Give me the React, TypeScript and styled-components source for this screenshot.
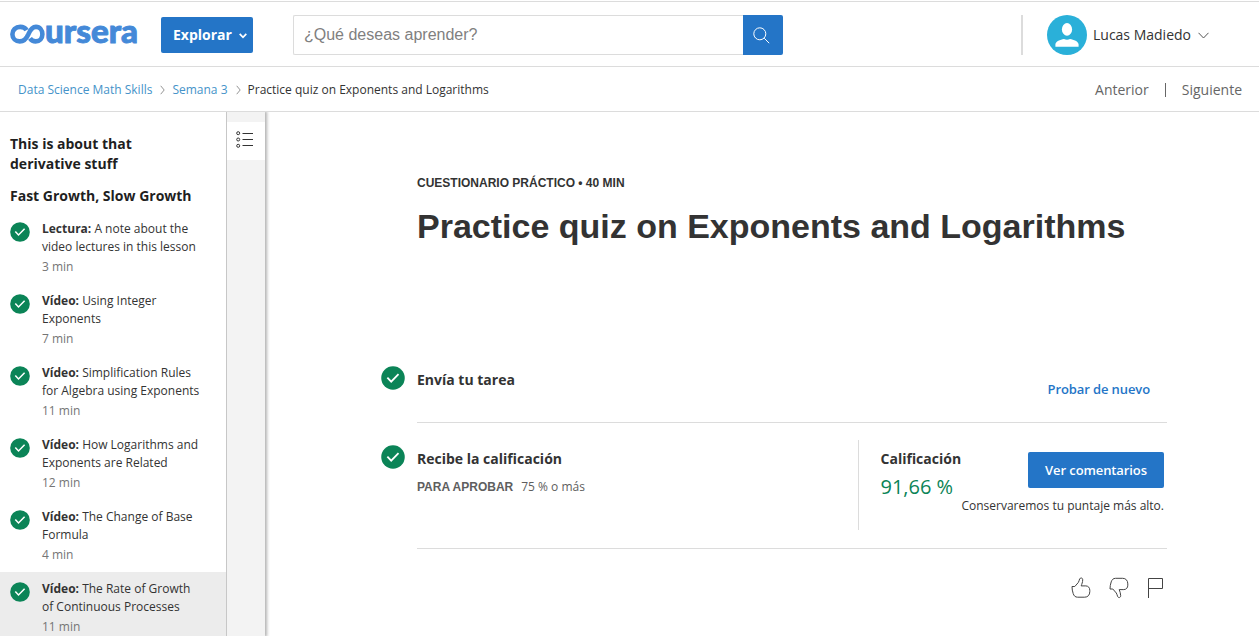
import React from 'react';
import styled, { createGlobalStyle } from 'styled-components';

const GlobalStyle = createGlobalStyle`
  *, *::before, *::after { box-sizing: border-box; }
  html, body { margin: 0; padding: 0; background: #fff; overflow: hidden; }
  body { font-family: "Open Sans", "Noto Sans", sans-serif; color: #333; font-size: 14px; }
  svg { display: block; flex: none; }
  h1, h2, h3, p, ul { margin: 0; padding: 0; }
  button { font-family: inherit; border: 0; margin: 0; cursor: pointer; }
  a { text-decoration: none; }
`;

const Page = styled.div`
  display: flex;
  flex-direction: column;
  width: 1259px;
  height: 636px;
  overflow: hidden;
  padding-top: 1px;
`;

const Header = styled.header`
  flex: none;
  display: flex;
  align-items: center;
  height: 66px;
  padding-left: 10px;
  border-top: 1px solid #dcdcdc;
  border-bottom: 1px solid #dcdcdc;
`;

const ExploreButton = styled.button`
  display: flex;
  align-items: center;
  gap: 7px;
  width: 92px;
  height: 36px;
  margin: 2px 0 0 23px;
  padding: 0 0 1px 12px;
  border-radius: 2px;
  background: #2475c7;
  color: #fff;
  font-size: 14px;
  font-weight: 700;
  svg { margin-top: 3px; }
`;

const Search = styled.form`
  display: flex;
  width: 490px;
  height: 40px;
  margin: 2px 0 0 40px;
`;

const SearchInput = styled.input`
  flex: 1;
  min-width: 0;
  height: 40px;
  padding: 0 0 0 10px;
  border: 1px solid #dcdcdc;
  border-right: 0;
  border-radius: 2px 0 0 2px;
  outline: 0;
  font: 16px "Liberation Sans", Arial, sans-serif;
  &::placeholder { color: #808080; opacity: 1; }
`;

const SearchButton = styled.button`
  display: flex;
  align-items: center;
  justify-content: center;
  width: 40px;
  padding: 0 4px 0 0;
  border-radius: 0 2px 2px 0;
  background: #2475c7;
`;

const Account = styled.div`
  display: flex;
  align-items: center;
  height: 40px;
  margin: 2px 50px 0 auto;
  padding-left: 24px;
  border-left: 2px solid #dcdcdc;
`;

const UserName = styled.span`
  margin: 0 7px 0 6px;
  padding-bottom: 1px;
  font-size: 14px;
`;

const SubBar = styled.nav`
  flex: none;
  display: flex;
  align-items: center;
  justify-content: space-between;
  height: 45px;
  padding: 0 17px 0 18px;
  border-bottom: 1px solid #dcdcdc;
`;

const Crumbs = styled.div`
  display: flex;
  align-items: center;
  font-size: 12px;
  svg { margin: 2px 7px 0 8px; }
`;

const CrumbLink = styled.a`
  color: #4593c9;
`;

const Pager = styled.div`
  display: flex;
  align-items: center;
  color: #666;
  font-size: 14px;
`;

const PagerRule = styled.i`
  width: 1px;
  height: 14px;
  margin: 1px 16px 0;
  background: #666;
`;

const Body = styled.div`
  flex: 1;
  min-height: 0;
  display: flex;
`;

const Sidebar = styled.aside`
  flex: none;
  width: 227px;
  padding-top: 22px;
  border-right: 1px solid #c7c7c7;
  overflow: hidden;
`;

const ModuleTitle = styled.h2`
  padding: 0 60px 0 10px;
  color: #1f1f1f;
  font-size: 14px;
  line-height: 20px;
  font-weight: 700;
`;

const LessonTitle = styled.h3`
  padding: 12px 0 6px 10px;
  color: #1f1f1f;
  font-size: 14px;
  line-height: 20px;
  font-weight: 700;
`;

const LessonItem = styled.li<{ $active?: boolean }>`
  display: flex;
  gap: 12px;
  height: 72px;
  padding: 8px 0 0 10px;
  background: ${(p) => (p.$active ? '#ececec' : 'transparent')};
  svg { margin-top: 2px; }
`;

const LessonText = styled.div`
  font-size: 12px;
  line-height: 18px;
  white-space: pre-line;
`;

const Duration = styled.div`
  margin-top: 2px;
  color: #757575;
`;

const Rail = styled.div`
  flex: none;
  width: 38px;
  padding-top: 10px;
  background: #f3f3f3;
  box-shadow: 1px 0 3px 1px rgba(0, 0, 0, 0.3);
  clip-path: inset(0 -6px 0 0);
`;

const RailTab = styled.div`
  display: flex;
  align-items: center;
  justify-content: center;
  height: 38px;
  padding: 0 3px 3px 0;
  background: #fff;
`;

const Main = styled.main`
  flex: 1;
  display: flex;
  flex-direction: column;
  padding: 62px 92px 0 116px;
`;

const Eyebrow = styled.p`
  padding-left: 36px;
  font: 700 12px/18px "Liberation Sans", Arial, sans-serif;
`;

const Title = styled.h1`
  padding: 13px 0 0 36px;
  font: 700 34px/42px "Liberation Sans", Arial, sans-serif;
  white-space: nowrap;
`;

const StepList = styled.div`
  display: flex;
  flex-direction: column;
  gap: 22px;
  padding-top: 119px;
`;

const Step = styled.section`
  display: flex;
  gap: 12px;
`;

const StepBody = styled.div<{ $height: number }>`
  flex: 1;
  display: flex;
  justify-content: space-between;
  height: ${(p) => p.$height}px;
  padding-top: 4px;
  border-bottom: 1px solid #dcdcdc;
`;

const StepTitle = styled.h3`
  font-size: 14px;
  line-height: 20px;
  font-weight: 700;
`;

const Retry = styled.a`
  margin: 10px 17px 0 0;
  color: #2475c7;
  font-size: 13px;
  letter-spacing: -0.1px;
  line-height: 18px;
  font-weight: 600;
`;

const Requirement = styled.p`
  display: flex;
  gap: 8px;
  padding-top: 8px;
  color: #5e5e5e;
  font-size: 12px;
  line-height: 20px;
  b { font: 700 12px/20px "Liberation Sans", Arial, sans-serif; }
`;

const GradePanel = styled.div`
  display: flex;
  flex-direction: column;
  width: 309px;
  height: 90px;
  margin-top: -9px;
  padding: 9px 0 0 21.5px;
  border-left: 1px solid #dcdcdc;
`;

const GradeRow = styled.div`
  display: flex;
  justify-content: space-between;
  height: 48px;
  padding-right: 3px;
`;

const Grade = styled.div`
  color: #0b8457;
  font-size: 20px;
  line-height: 28px;
  padding-top: 4px;
`;

const FeedbackButton = styled.button`
  width: 136px;
  height: 36px;
  margin-top: 3px;
  padding: 0;
  border-radius: 2px;
  background: #2475c7;
  color: #fff;
  font-size: 13px;
  letter-spacing: -0.1px;
  font-weight: 600;
`;

const GradeNote = styled.p`
  padding-right: 3px;
  text-align: right;
  font-size: 12px;
  line-height: 18px;
  white-space: nowrap;
`;

const Reactions = styled.div`
  display: flex;
  justify-content: flex-end;
  gap: 18px;
  padding: 28px 3px 0 0;
`;

const Logo = () => (
  <svg width="128" height="44" viewBox="0 -10 128 44" role="img" aria-label="coursera">
    <path
      d="M16.6 8.2C15.3 5.8 13 4.9 10.2 4.9C5.6 4.9 2.4 8 2.4 12.2C2.4 16.400 5.6 19.400 9.800 19.400C14 19.400 16.200 17 18.400 12.200C20.400 7.400 22.600 4.900 26 4.900C30 4.900 32.400 8.400 32.400 12.200C32.400 16.400 29.600 19.400 25.700 19.400C23 19.400 21.200 18.200 20 16.400"
      fill="none"
      stroke="#4489d8"
      strokeWidth="4.6"
    />
    <text
      x="35"
      y="21"
      fill="#4489d8"
      stroke="#4489d8"
      strokeWidth="0.9"
      fontFamily="Lato, sans-serif"
      fontWeight="900"
      fontSize="32"
      textLength="93"
      lengthAdjust="spacingAndGlyphs"
    >
      ursera
    </text>
  </svg>
);

const CheckBadge = ({ size }: { size: number }) => (
  <svg width={size} height={size} viewBox="0 0 20 20">
    <circle cx="10" cy="10" r="9.8" fill="#0b8457" />
    <path d="M5.3 9.6l3.2 3.4 6.1-6.3" fill="none" stroke="#fff" strokeWidth="1.5" />
  </svg>
);

const Chevron = () => (
  <svg width="5" height="10" viewBox="0 0 5 10">
    <path d="M.7.8 4.2 5 .7 9.2" fill="none" stroke="#888" strokeWidth="0.9" />
  </svg>
);

const lessons = [
  { kind: 'Lectura:', title: 'A note about the\nvideo lectures in this lesson', time: '3 min' },
  { kind: 'Vídeo:', title: 'Using Integer\nExponents', time: '7 min' },
  { kind: 'Vídeo:', title: 'Simplification Rules\nfor Algebra using Exponents', time: '11 min' },
  { kind: 'Vídeo:', title: 'How Logarithms and\nExponents are Related', time: '12 min' },
  { kind: 'Vídeo:', title: 'The Change of Base\nFormula', time: '4 min' },
  { kind: 'Vídeo:', title: 'The Rate of Growth\nof Continuous Processes', time: '11 min', active: true },
];

const THUMB =
  'M1 9.5H3.8L7.3 5.5C8.2 4.3 8 3.2 8.6 2C9 1.2 9.6 1 10.2 1C11.2 1 11.7 1.8 11.7 2.8C11.7 5.2 10.8 7 10.2 8.9H14.8C17.3 8.900 18.800 10.800 18.800 13.300V14.600C18.800 18 16.800 20.200 13.700 20.200H6.600C4.200 20.200 2.900 18.800 2.200 16.600C1.400 14.200 1 12 1 9.500Z';

export default function App() {
  return (
    <>
      <GlobalStyle />
      <Page>
        <Header>
          <Logo />
          <ExploreButton>
            Explorar
            <svg width="8" height="6" viewBox="0 0 8 6">
              <path d="M.7.8 4 4.3 7.3.8" fill="none" stroke="#fff" strokeWidth="1.7" />
            </svg>
          </ExploreButton>
          <Search>
            <SearchInput placeholder="¿Qué deseas aprender?" />
            <SearchButton type="button" aria-label="Buscar">
              <svg width="17" height="17" viewBox="0 0 17 17" fill="none" stroke="#fff">
                <circle cx="6.8" cy="6.8" r="6" />
                <path d="m11.2 11.2 5 5" />
              </svg>
            </SearchButton>
          </Search>
          <Account>
            <svg width="40" height="40" viewBox="0 0 40 40">
              <circle cx="20" cy="20" r="20" fill="#2ab0d9" />
              <ellipse cx="20" cy="14.4" rx="5.1" ry="6.3" fill="#fff" />
              <path
                d="M8.4 31.7v-2.4c0-2.7 5-5 8.6-5.4 1.6 1 4.4 1 6 0 3.6.4 8.6 2.7 8.6 5.4v2.4Z"
                fill="#fff"
              />
            </svg>
            <UserName>Lucas Madiedo</UserName>
            <svg width="11" height="7" viewBox="0 0 11 7">
              <path d="M.5.8 5.5 6 10.5.8" fill="none" stroke="#555" />
            </svg>
          </Account>
        </Header>
        <SubBar>
          <Crumbs>
            <CrumbLink>Data Science Math Skills</CrumbLink>
            <Chevron />
            <CrumbLink>Semana 3</CrumbLink>
            <Chevron />
            <span>Practice quiz on Exponents and Logarithms</span>
          </Crumbs>
          <Pager>
            <span>Anterior</span>
            <PagerRule />
            <span>Siguiente</span>
          </Pager>
        </SubBar>
        <Body>
          <Sidebar>
            <ModuleTitle>This is about that derivative stuff</ModuleTitle>
            <LessonTitle>Fast Growth, Slow Growth</LessonTitle>
            <ul>
              {lessons.map((l) => (
                <LessonItem key={l.title} $active={l.active}>
                  <CheckBadge size={20} />
                  <LessonText>
                    <b>{l.kind}</b> {l.title}
                    <Duration>{l.time}</Duration>
                  </LessonText>
                </LessonItem>
              ))}
            </ul>
          </Sidebar>
          <Rail>
            <RailTab>
              <svg width="18" height="17" viewBox="0 0 18 17" fill="none" stroke="#333">
                <circle cx="2.2" cy="2.2" r="1.5" />
                <circle cx="2.2" cy="8.5" r="1.5" />
                <circle cx="2.2" cy="14.8" r="1.5" />
                <path d="M6.500 2.500H17M6.500 8.500H17M6.500 14.500H17" />
              </svg>
            </RailTab>
          </Rail>
          <Main>
            <Eyebrow>CUESTIONARIO PRÁCTICO • 40 MIN</Eyebrow>
            <Title>Practice quiz on Exponents and Logarithms</Title>
            <StepList>
              <Step>
                <CheckBadge size={24} />
                <StepBody $height={57}>
                  <StepTitle>Envía tu tarea</StepTitle>
                  <Retry>Probar de nuevo</Retry>
                </StepBody>
              </Step>
              <Step>
                <CheckBadge size={24} />
                <StepBody $height={104}>
                  <div>
                    <StepTitle>Recibe la calificación</StepTitle>
                    <Requirement>
                      <b>PARA APROBAR</b>
                      <span>75 % o más</span>
                    </Requirement>
                  </div>
                  <GradePanel>
                    <GradeRow>
                      <div>
                        <StepTitle>Calificación</StepTitle>
                        <Grade>91,66 %</Grade>
                      </div>
                      <FeedbackButton>Ver comentarios</FeedbackButton>
                    </GradeRow>
                    <GradeNote>Conservaremos tu puntaje más alto.</GradeNote>
                  </GradePanel>
                </StepBody>
              </Step>
            </StepList>
            <Reactions>
              <svg width="20" height="22" viewBox="0 0 20 22" fill="none" stroke="#444">
                <path d={THUMB} />
              </svg>
              <svg width="20" height="22" viewBox="0 0 20 22" fill="none" stroke="#444">
                <path d={THUMB} transform="matrix(1 0 0 -1 0 21.5)" />
              </svg>
              <svg width="17" height="22" viewBox="0 0 17 22" fill="none" stroke="#444">
                <path d="M1.500 21V1.500H15.500V11.500H1.500" />
              </svg>
            </Reactions>
          </Main>
        </Body>
      </Page>
    </>
  );
}
